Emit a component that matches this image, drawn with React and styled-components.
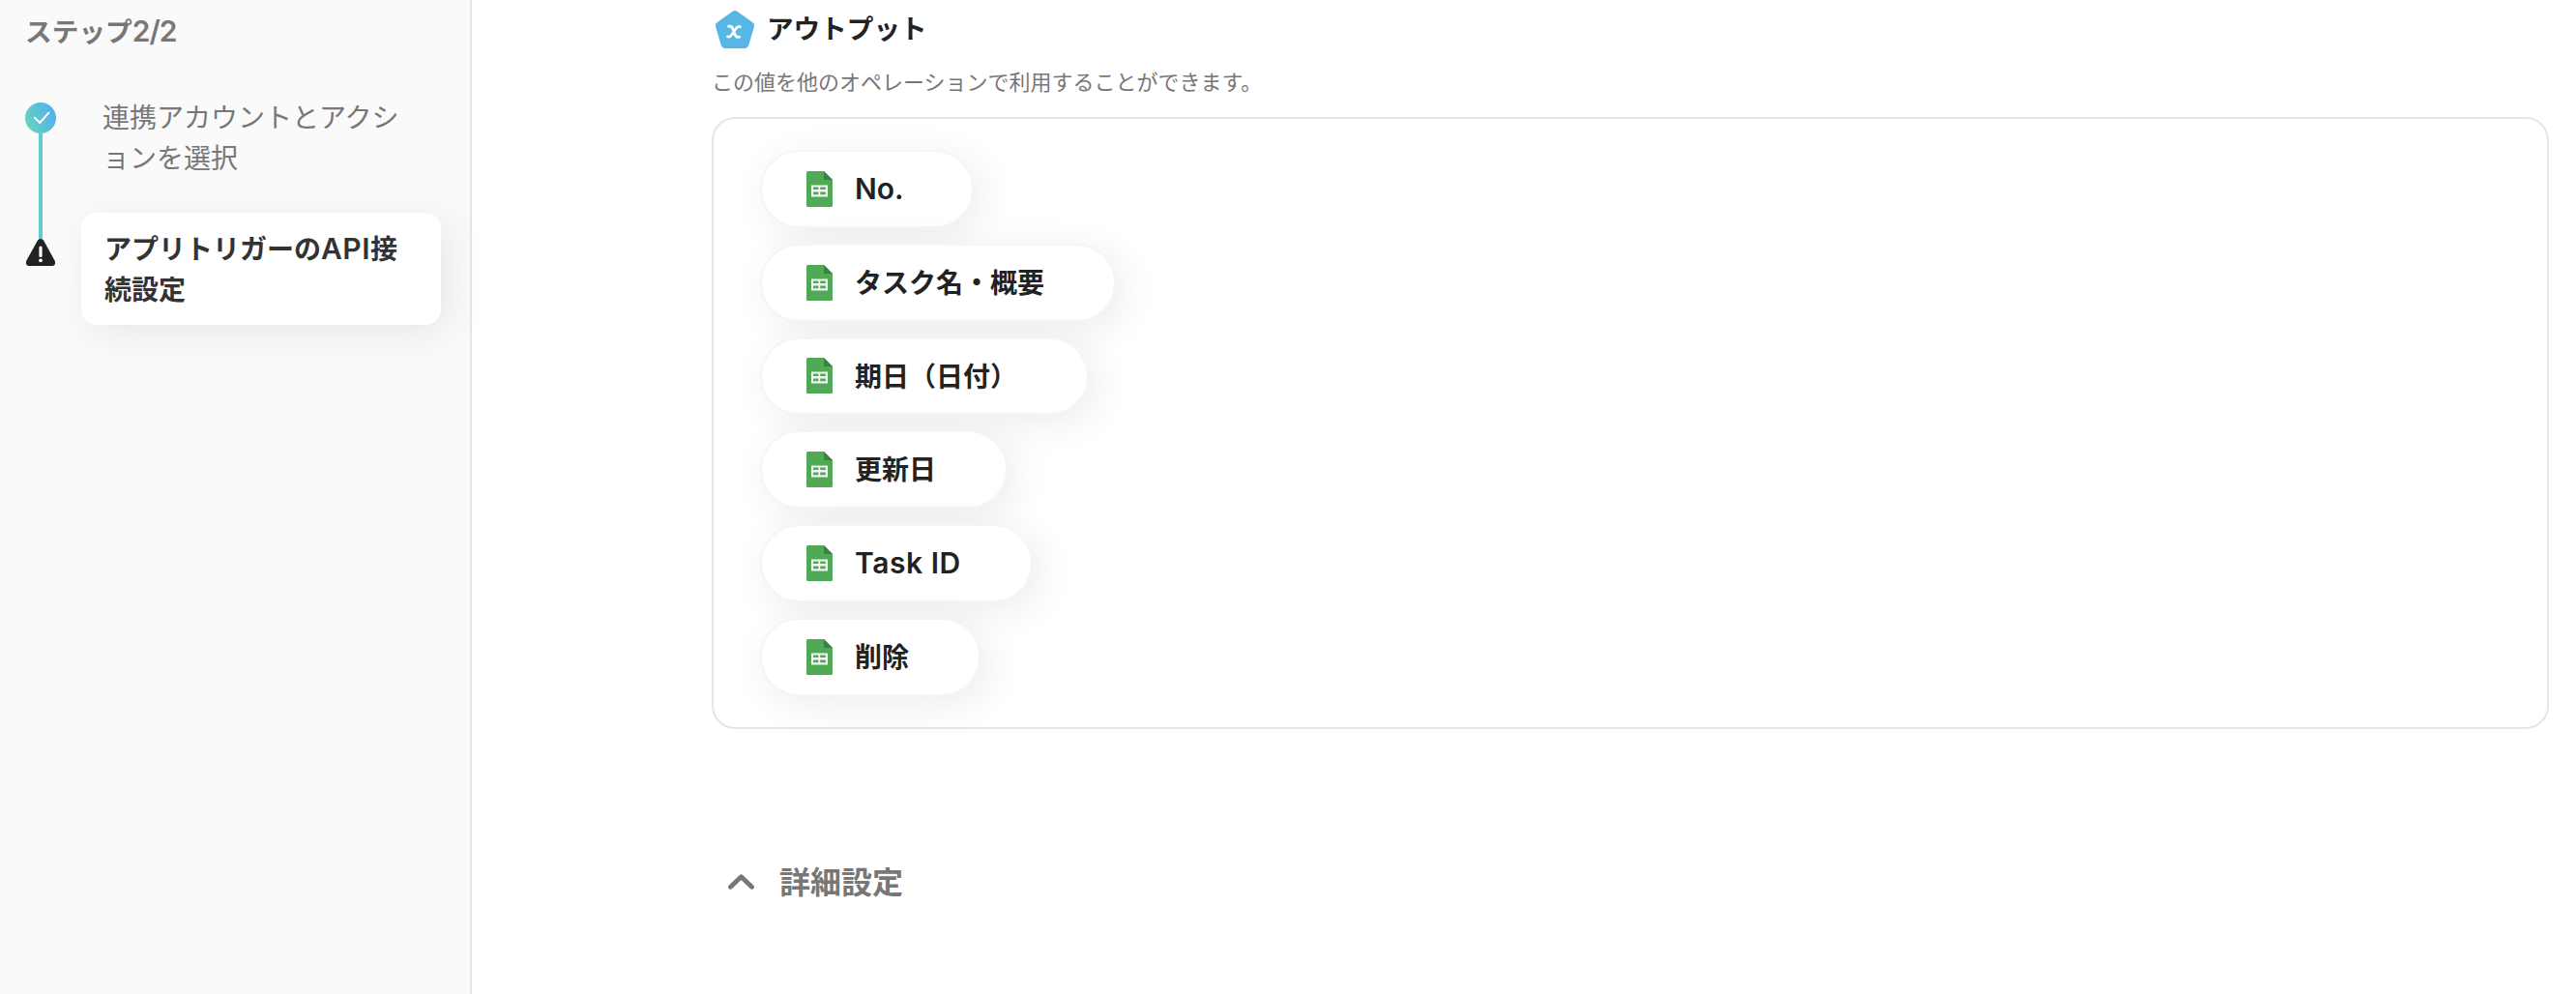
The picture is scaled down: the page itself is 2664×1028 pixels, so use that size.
import React from "react";
import styled, { createGlobalStyle, css } from "styled-components";

const Global = createGlobalStyle`
  * { box-sizing: border-box; }
  html, body { margin: 0; background: #fff; }
  body {
    font-family: "Noto Sans CJK JP", sans-serif;
    color: #222;
    overflow: hidden;
  }
  p, h2, h3, ol, ul { margin: 0; padding: 0; list-style: none; }
`;

const Page = styled.div`
  display: flex;
  width: 2664px;
  height: 1028px;
  overflow: hidden;
`;

const Sidebar = styled.aside`
  width: 488px;
  flex: none;
  padding: 9px 30px 0 26px;
  background: #fafafa;
  border-right: 2px solid #e5e5e5;
`;

const SidebarTitle = styled.h2`
  font-size: 27.700px;
  line-height: 45px;
  font-weight: 700;
  color: #777;
`;

const Latin = styled.span`
  font-family: Inter, "Liberation Sans", sans-serif;
  font-size: 30px;
  font-weight: 600;
  letter-spacing: ${(p) => p.$spacing || 0}px;
  line-height: 1;
`;

const StepColumns = styled.div`
  display: flex;
  margin-top: 44px;
`;

const Rail = styled.div`
  display: flex;
  flex-direction: column;
  align-items: center;
  width: 32px;
  padding-top: 8px;
`;

const RailLine = styled.div`
  width: 4px;
  height: 109px;
  background: #64cbd0;
`;

const Steps = styled.ol`
  width: 372px;
  margin-left: 26px;
  padding-top: 1px;
`;

const Step = styled.li`
  padding: 0 0 0 22px;
  font-size: 28px;
  line-height: 42px;
  color: #777;
  ${(p) =>
    p.$active &&
    css`
      margin-top: 37px;
      height: 116px;
      padding: 15px 0 0 24px;
      border-radius: 16px;
      background: #fff;
      font-weight: 700;
      color: #333;
      box-shadow: 8px 8px 40px rgba(0, 0, 0, 0.08);
    `}
`;

const Main = styled.main`
  flex: 1;
  padding: 6px 28px 0 248px;
`;

const SectionHead = styled.div`
  display: flex;
  align-items: center;
  height: 48px;
  padding-left: 4px;
`;

const SectionTitle = styled.h2`
  margin: -4px 0 0 13px;
  font-size: 27.600px;
  line-height: 45px;
  font-weight: 700;
`;

const Description = styled.p`
  margin-top: 12px;
  height: 55px;
  font-size: 22px;
  line-height: 35px;
  color: #777;
`;

const OutputBox = styled.ul`
  display: flex;
  flex-direction: column;
  align-items: flex-start;
  gap: 16px;
  height: 633px;
  padding: 32px 48px;
  border: 2px solid #e5e5e5;
  border-radius: 24px;
`;

const Pill = styled.li`
  display: flex;
  align-items: center;
  width: ${(p) => p.$width}px;
  height: 80.8px;
  flex: none;
  padding-left: 46px;
  border: 2px solid #f5f5f5;
  border-radius: 41px;
  background: #fff;
  box-shadow: 8px 8px 40px rgba(0, 0, 0, 0.08);
`;

const PillLabel = styled.span`
  margin: -2px 0 0 23px;
  font-size: 28px;
  line-height: 44.8px;
  font-weight: 700;
  white-space: nowrap;
`;

const Advanced = styled.div`
  display: flex;
  align-items: center;
  margin: 132px 0 0 17px;
  height: 52px;
  color: #777;
`;

const AdvancedTitle = styled.h3`
  margin: -5px 0 0 26px;
  font-size: 32px;
  line-height: 52px;
  font-weight: 700;
`;

const CheckIcon = () => (
  <svg width="32" height="32" viewBox="0 0 32 32" display="block">
    <defs>
      <linearGradient id="done" x1="0" y1="0.75" x2="1" y2="0.25">
        <stop offset="0" stopColor="#69d3ba" />
        <stop offset="0.85" stopColor="#55b4e8" />
      </linearGradient>
    </defs>
    <circle cx="16" cy="16" r="16" fill="url(#done)" />
    <path d="M9.800 15.800l5.400 5.200 9.200-10.400" fill="none" stroke="#fff" strokeWidth="2" strokeLinecap="round" strokeLinejoin="round" />
  </svg>
);

const WarningIcon = () => (
  <svg width="32" height="28" viewBox="0 0 32 28" display="block">
    <path d="M13 1.500Q16-1.400 19 1.500L30.600 22.500Q32.300 27.400 28 28H4Q-.3 27.400 1.400 22.500Z" fill="#222" />
    <path d="M16 9v8.500" stroke="#fff" strokeWidth="3.200" strokeLinecap="round" />
    <circle cx="16" cy="22.300" r="1.900" fill="#fff" />
  </svg>
);

const VariableIcon = () => (
  <svg width="40" height="39" viewBox="0 0 40 39" display="block">
    <path d="M17.300 1Q20-.9 22.700 1L38.500 12.200Q40.500 13.800 39.900 16.500L34.400 35.500Q33.300 38.800 30 39H10Q6.700 38.800 5.600 35.500L.1 16.500Q-.5 13.800 1.500 12.200Z" fill="#56b7e4" />
    <path d="M13.600 16.400C16.200 15.600 17.300 17.200 18 19.200L20 24.400C20.900 26.900 22.300 28 24.700 27.200M25.400 16.800C23.200 15.600 21.600 17.600 20.400 19.400L17.200 24.200C15.800 26.400 14.600 27.700 12.600 26.800" fill="none" stroke="#fff" strokeWidth="2.700" strokeLinecap="round" />
  </svg>
);

const SheetIcon = () => (
  <svg width="27" height="37" viewBox="0 0 27 37" display="block">
    <path d="M1.500 0H18L27 9V35.500Q27 37 25.500 37H1.500Q0 37 0 35.500V1.500Q0 0 1.500 0Z" fill="#4fa955" />
    <path d="M18 0l9 9h-9z" fill="#3b8140" />
    <path fillRule="evenodd" d="M5 14.500h17v12h-17zM7 16.600v2.500h5.400v-2.500zM14.200 16.600v2.500h5.600v-2.500zM7 21.500v2.700h5.400v-2.700zM14.200 21.500v2.700h5.600v-2.700z" fill="#f3f3f3" />
  </svg>
);

const ChevronIcon = () => (
  <svg width="27" height="18" viewBox="0 0 27 18" display="block">
    <path d="M2.500 14.300L13.500 3.700l11 10.600" fill="none" stroke="#777" strokeWidth="4.800" strokeLinecap="round" strokeLinejoin="round" />
  </svg>
);

const outputs = [
  { label: "No.", latin: true, width: 221 },
  { label: "タスク名・概要", width: 368 },
  { label: "期日（日付）", width: 340 },
  { label: "更新日", width: 256 },
  { label: "Task ID", latin: true, spacing: 0.55, width: 282 },
  { label: "削除", width: 228 },
];

export default function App() {
  return (
    <Page>
      <Global />
      <Sidebar>
        <SidebarTitle>
          ステップ<Latin $spacing={-1}>2/2</Latin>
        </SidebarTitle>
        <StepColumns>
          <Rail>
            <CheckIcon />
            <RailLine />
            <WarningIcon />
          </Rail>
          <Steps>
            <Step>
              連携アカウントとアクシ
              <br />
              ョンを選択
            </Step>
            <Step $active>
              アプリトリガーの<Latin $spacing={0.5}>API</Latin>接
              <br />
              続設定
            </Step>
          </Steps>
        </StepColumns>
      </Sidebar>
      <Main>
        <SectionHead>
          <VariableIcon />
          <SectionTitle>アウトプット</SectionTitle>
        </SectionHead>
        <Description>この値を他のオペレーションで利用することができます。</Description>
        <OutputBox>
          {outputs.map((o) => (
            <Pill key={o.label} $width={o.width}>
              <SheetIcon />
              <PillLabel>{o.latin ? <Latin $spacing={o.spacing}>{o.label}</Latin> : o.label}</PillLabel>
            </Pill>
          ))}
        </OutputBox>
        <Advanced>
          <ChevronIcon />
          <AdvancedTitle>詳細設定</AdvancedTitle>
        </Advanced>
      </Main>
    </Page>
  );
}
